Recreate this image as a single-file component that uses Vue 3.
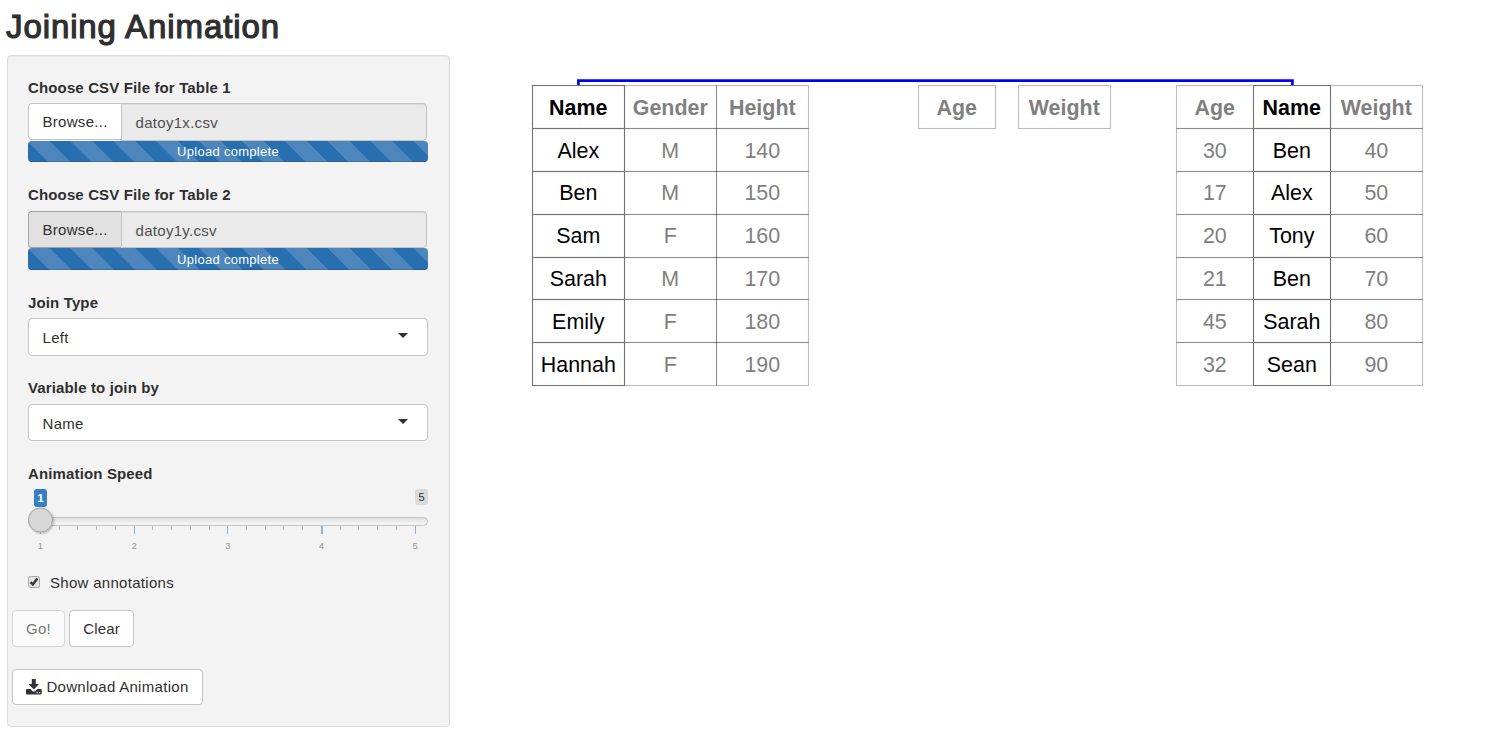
<script setup>
const uploads = [
  { label: 'Choose CSV File for Table 1', file: 'datoy1x.csv', active: false },
  { label: 'Choose CSV File for Table 2', file: 'datoy1y.csv', active: true },
]
const selects = [
  { label: 'Join Type', value: 'Left' },
  { label: 'Variable to join by', value: 'Name', second: true },
]

const ROW = 42.86
const TOP = 85.6
const ticks = Array.from({ length: 21 }, (_, i) => ({
  x: 12.5 + i * 18.73,
  w: i === 15 ? 2 : 1,
  major: i % 5 === 0,
  n: i / 5 + 1,
}))

const snap = (v) => Math.floor(v) + 0.5

function column(x, w, key, values) {
  return {
    x: snap(x),
    w: snap(x + w) - snap(x),
    key,
    cells: values.map((t, i) => {
      const y = snap(TOP + i * ROW)
      return { t, y, h: snap(TOP + (i + 1) * ROW) - y, base: Math.floor(TOP + 29.6 + i * ROW), head: i === 0 }
    }),
  }
}
const columns = [
  column(624.6, 92.1, false, ['Gender', 'M', 'M', 'F', 'M', 'F', 'F']),
  column(716.6, 92.1, false, ['Height', '140', '150', '160', '170', '180', '190']),
  column(918.8, 77, false, ['Age']),
  column(1018.3, 92.3, false, ['Weight']),
  column(1176.9, 76.8, false, ['Age', '30', '17', '20', '21', '45', '32']),
  column(1330.5, 92.1, false, ['Weight', '40', '50', '60', '70', '80', '90']),
  column(532.5, 92.1, true, ['Name', 'Alex', 'Ben', 'Sam', 'Sarah', 'Emily', 'Hannah']),
  column(1253.6, 76.9, true, ['Name', 'Ben', 'Alex', 'Tony', 'Ben', 'Sarah', 'Sean']),
]
</script>

<template>
  <div class="page">
    <h1>Joining Animation</h1>
    <div class="well">
      <div v-for="u in uploads" :key="u.label" class="group upload" :class="{ second: u.active }">
        <label>{{ u.label }}</label>
        <div class="file">
          <span class="browse" :class="{ active: u.active }">Browse...</span>
          <span class="name">{{ u.file }}</span>
        </div>
        <div class="progress">Upload complete</div>
      </div>
      <div v-for="s in selects" :key="s.label" class="group choice" :class="{ second: s.second }">
        <label>{{ s.label }}</label>
        <div class="select"><span>{{ s.value }}</span><i class="caret"></i></div>
      </div>
      <div class="group speed">
        <label>Animation Speed</label>
        <svg class="slider" width="402" height="66" viewBox="0 0 402 66">
          <defs>
            <linearGradient id="track" x1="0" y1="0" x2="0" y2="1">
              <stop offset="0" stop-color="#dedede" /><stop offset="1" stop-color="#f8f8f8" />
            </linearGradient>
            <filter id="drop" x="-30%" y="-30%" width="170%" height="170%">
              <feDropShadow dx="1" dy="1" stdDeviation="1.3" flood-color="#000" flood-opacity=".3" />
            </filter>
          </defs>
          <rect x="6" y="2" width="13" height="18" rx="3" fill="#367fc3" />
          <text x="12.5" y="14.5" class="from">1</text>
          <rect x="387" y="2" width="13" height="16" rx="3" fill="#dadada" />
          <text x="393.5" y="14" class="to">5</text>
          <rect x=".5" y="30.5" width="399" height="8" rx="4" fill="url(#track)" stroke="#c4c4c4" />
          <template v-for="t in ticks" :key="t.x">
            <rect :x="Math.floor(t.x)" y="39" :width="t.w" :height="t.major ? 8 : 4" :fill="t.major ? '#8ab5dc' : '#b5b5b5'" />
            <text v-if="t.major" :x="t.x" y="62" class="grid">{{ t.n }}</text>
          </template>
          <circle cx="12.5" cy="33" r="12" fill="#d7d7d7" stroke="#a5a5a5" filter="url(#drop)" />
        </svg>
      </div>
      <div class="check">
        <svg width="12" height="12" viewBox="0 0 12 12">
          <rect x=".5" y=".5" width="11" height="11" rx="2" fill="#e4e4e4" stroke="#a9a9a9" />
          <path d="M2.6 6.2 4.8 8.5 9.4 2.6" fill="none" stroke="#333" stroke-width="2.4" />
        </svg>
        <span>Show annotations</span>
      </div>
      <div class="buttons">
        <span class="btn go">Go!</span>
        <span class="btn clear">Clear</span>
      </div>
      <span class="btn download">
        <svg width="16" height="16" viewBox="0 0 16 16">
          <path fill="#333" fill-rule="evenodd" d="M5.8 0h4v5h3.2L7.8 10.4 2.6 5h3.2zM.9 10h3.5l2 2q1.4 1.1 2.8 0l2-2h3.5q1 0 1 1v3.5q0 1-1 1H.9q-.9 0-.9-1V11q0-1 .9-1zM10.5 13v1.2h1.2V13zM13 13v1.2h1.2V13z" />
        </svg>
        <span>Download Animation</span>
      </span>
    </div>

    <svg class="canvas" width="1512" height="749" viewBox="0 0 1512 749">
      <path d="M578.4 86V80.6H1292.4V86" fill="none" stroke="#0000ff" stroke-width="2.7" />
      <g v-for="c in columns" :key="c.x" :class="{ key: c.key }">
        <template v-for="cell in c.cells" :key="cell.y">
          <rect :x="c.x" :y="cell.y" :width="c.w" :height="cell.h" />
          <text :x="c.x + c.w / 2 - 0.2" :y="cell.base" :class="{ head: cell.head }">{{ cell.t }}</text>
        </template>
      </g>
    </svg>
  </div>
</template>

<style scoped>
.page {
  position: relative;
  width: 1512px;
  height: 749px;
  overflow: hidden;
  background: #fff;
  color: #2f2f2f;
  font: 15px/21px "Liberation Sans", Arial, sans-serif;
  letter-spacing: 0.3px;
}
.page * { box-sizing: border-box; }
h1 {
  margin: 0;
  height: 55px;
  padding: 8px 0 0 6px;
  font-size: 33px;
  line-height: 37px;
  font-weight: 400;
  letter-spacing: 0.9px;
  -webkit-text-stroke: 1.2px #2f2f2f;
  white-space: nowrap;
}
.well {
  width: 443px;
  height: 672px;
  margin-left: 7px;
  padding: 21px 0 0 20px;
  background: #f3f3f3;
  border: 1px solid #dcdcdc;
  border-radius: 4px;
  box-shadow: inset 0 1px 1px rgba(0, 0, 0, 0.05);
}
.group { width: 400px; }
.upload { height: 107.5px; }
.choice { height: 85.7px; }
.speed { height: 108.6px; }
label {
  display: block;
  height: 26px;
  line-height: 22px;
  font-weight: 700;
  letter-spacing: 0.14px;
  white-space: nowrap;
}
.second label { line-height: 20px; }
.file { display: flex; height: 37.5px; width: 399px; }
.browse {
  width: 93px;
  height: 37px;
  line-height: 36px;
  padding-left: 13.5px;
  background: #fff;
  border: 1px solid #c4c4c4;
  border-right: 0;
  border-radius: 4px 0 0 4px;
}
.browse.active { background: #e1e1e1; border-color: #a3a3a3; }
.name {
  flex: 1;
  line-height: 38px;
  padding-left: 13.5px;
  color: #505050;
  background: #eaeaea;
  border: 1px solid #c4c4c4;
  border-radius: 0 4px 4px 0;
  box-shadow: inset 0 1px 1px rgba(0, 0, 0, 0.075);
}
.progress {
  height: 21.5px;
  line-height: 22px;
  border-radius: 4px;
  text-align: center;
  font-size: 13px;
  color: #fff;
  background-color: #286fb0;
  background-image: linear-gradient(45deg, #4c86bd 25%, transparent 25%, transparent 50%, #4c86bd 50%, #4c86bd 75%, transparent 75%, transparent);
  background-size: 42.86px 42.86px;
  box-shadow: inset 0 -1px 0 rgba(0, 0, 0, 0.15);
}
.second .progress { line-height: 23px; }
.select {
  display: flex;
  align-items: center;
  justify-content: space-between;
  height: 37.5px;
  padding: 1px 19px 0 13.5px;
  background: #fff;
  border: 1px solid #c4c4c4;
  border-radius: 4px;
}
.second .select { padding-top: 2px; }
.caret {
  width: 0;
  height: 0;
  margin-top: -3px;
  border: 5.5px solid transparent;
  border-top-color: #2f2f2f;
  border-bottom: 0;
}
.slider { display: block; overflow: visible; margin-top: -2px; letter-spacing: 0; }
.slider text { text-anchor: middle; }
.from { font-size: 11px; font-weight: 700; fill: #fff; }
.to { font-size: 11px; fill: #333; }
.grid { font-size: 9.6px; fill: #8f999e; }
.check { display: flex; align-items: center; gap: 10px; height: 21px; }
.buttons { display: flex; gap: 4px; margin: 17px 0 22px -16px; }
.btn {
  display: flex;
  align-items: center;
  justify-content: center;
  height: 37px;
  background: #fff;
  border: 1px solid #c4c4c4;
  border-radius: 4px;
  white-space: nowrap;
}
.go { width: 53px; color: #777; background: #fbfbfb; border-color: #d7d7d7; }
.clear { width: 65px; letter-spacing: 0.15px; }
.download { width: 191px; height: 36px; margin-left: -16px; gap: 4px; }
.canvas { position: absolute; left: 0; top: 0; letter-spacing: 0; }
.canvas rect { fill: none; stroke: #000; stroke-opacity: 0.26; stroke-width: 1.1; }
.canvas text { font-size: 21.43px; text-anchor: middle; fill: #808080; }
.canvas .key rect { stroke: #747474; stroke-opacity: 1; }
.canvas .key text { fill: #000; }
.canvas .head { font-weight: 700; }
</style>
